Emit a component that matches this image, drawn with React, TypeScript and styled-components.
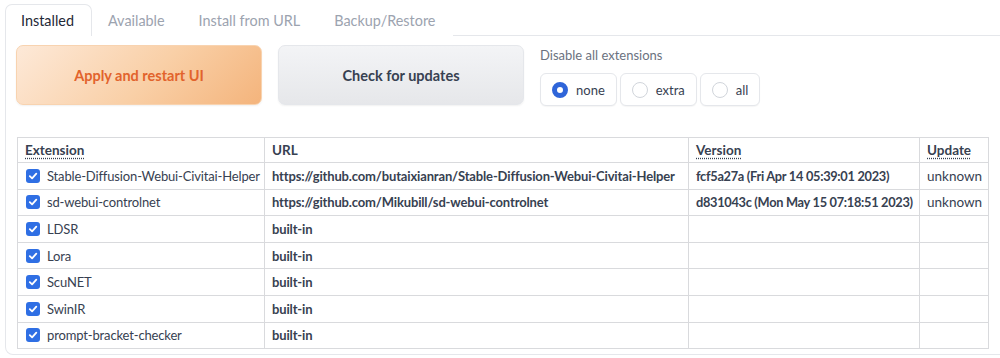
import React, { useState } from 'react'
import styled, { createGlobalStyle } from 'styled-components'

const GlobalStyle = createGlobalStyle`
  body {
    margin: 0;
    background: #fff;
    font-family: Lato, 'Noto Sans', sans-serif;
    color: #1f2937;
    overflow: hidden;
  }
`

const Page = styled.div`
  padding: 4px 0 0 5px;
`

const TabBar = styled.div`
  display: flex;
  height: 31px;
  border-bottom: 1px solid #e5e7eb;
`

const Tab = styled.div<{ active?: boolean }>`
  display: flex;
  align-items: center;
  padding: 0 17px 0 15px;
  font-size: 14.4px;
  color: ${p => (p.active ? '#1f2937' : '#9ca3af')};
  background: #fff;
  border: 1px solid ${p => (p.active ? '#e5e7eb' : 'transparent')};
  border-bottom: none;
  border-radius: 7px 7px 0 0;
  height: 32px;
  box-sizing: border-box;
`

const Panel = styled.div`
  border: 1px solid #e5e7eb;
  border-top: none;
  border-radius: 0 0 0 8px;
  margin-right: -20px;
  padding: 9px 0 5px 10px;
`

const Controls = styled.div`
  display: flex;
  gap: 16px;
`

const BigButton = styled.button<{ primary?: boolean }>`
  width: 246px;
  height: 60px;
  border-radius: 7px;
  font-family: inherit;
  font-size: 14.5px;
  font-weight: 700;
  cursor: pointer;
  border: 1px solid ${p => (p.primary ? '#f8d3b0' : '#e5e7eb')};
  color: ${p => (p.primary ? '#e2632c' : '#374151')};
  background: ${p =>
    p.primary
      ? 'linear-gradient(135deg, #fde9d8 0%, #f9cfa6 55%, #f4b47c 100%)'
      : 'linear-gradient(180deg, #f3f4f6 0%, #e6e7ea 100%)'};
  box-shadow: 0 1px 2px rgba(0, 0, 0, 0.06);
`

const RadioBlock = styled.div`
  display: flex;
  flex-direction: column;
  padding-top: 2px;
`

const RadioLabel = styled.div`
  font-size: 13px;
  color: #6b7280;
  height: 16px;
  margin-bottom: 10px;
`

const RadioRow = styled.div`
  display: flex;
  gap: 3px;
`

const RadioItem = styled.label`
  display: flex;
  align-items: center;
  gap: 8px;
  height: 33px;
  padding: 0 11px;
  box-sizing: border-box;
  border: 1px solid #e5e7eb;
  border-radius: 6px;
  background: #fff;
  font-size: 13px;
  color: #374151;
  box-shadow: 0 1px 1px rgba(0, 0, 0, 0.04);
  cursor: pointer;
`

const RadioDot = styled.span<{ checked: boolean }>`
  width: 16px;
  height: 16px;
  border-radius: 50%;
  box-sizing: border-box;
  background: #fff;
  border: ${p => (p.checked ? '5px solid #2f65d9' : '1px solid #d1d5db')};
`

const Table = styled.table`
  margin: 31px 0 0 1px;
  width: 971px;
  border-collapse: collapse;
  table-layout: fixed;
  font-size: 13.5px;
  color: #374151;
`

const HeadCell = styled.th<{ w: number }>`
  width: ${p => p.w}px;
  box-sizing: border-box;
  height: 25px;
  text-align: left;
  padding: 0 7px;
  font-weight: 700;
  border: 1px solid #d9dadd;
  white-space: nowrap;
`

const Abbr = styled.span<{ dotted?: boolean }>`
  text-decoration: ${p => (p.dotted ? 'underline dotted' : 'none')};
  text-underline-offset: 3px;
`

type Kind = 'name' | 'url' | 'version' | 'plain'

const sizes: Record<Kind, string> = { name: '13px', url: '13px', version: '12.8px', plain: '13.5px' }
const spacing: Record<Kind, string> = { name: '-0.15px', url: '-0.15px', version: '-0.3px', plain: '0' }

const Cell = styled.td<{ kind: Kind }>`
  height: 25.6px;
  padding: ${p => (p.kind === 'name' ? '0 0 0 7px' : '0 7px')};
  border: 1px solid #d9dadd;
  white-space: nowrap;
  overflow: ${p => (p.kind === 'name' ? 'visible' : 'hidden')};
  font-weight: ${p => (p.kind === 'url' || p.kind === 'version' ? 700 : 400)};
  font-size: ${p => sizes[p.kind]};
  letter-spacing: ${p => spacing[p.kind]};
`

const NameWrap = styled.label`
  display: flex;
  align-items: center;
  gap: 7px;
  padding-left: 1px;
`

const Check = styled.span`
  width: 14px;
  height: 14px;
  border-radius: 3px;
  background: #2f6fe4;
  display: inline-flex;
  align-items: center;
  justify-content: center;
  flex: none;
`

const rows = [
  {
    name: 'Stable-Diffusion-Webui-Civitai-Helper',
    url: 'https://github.com/butaixianran/Stable-Diffusion-Webui-Civitai-Helper',
    version: 'fcf5a27a (Fri Apr 14 05:39:01 2023)',
    update: 'unknown',
  },
  {
    name: 'sd-webui-controlnet',
    url: 'https://github.com/Mikubill/sd-webui-controlnet',
    version: 'd831043c (Mon May 15 07:18:51 2023)',
    update: 'unknown',
  },
  { name: 'LDSR', url: 'built-in', version: '', update: '' },
  { name: 'Lora', url: 'built-in', version: '', update: '' },
  { name: 'ScuNET', url: 'built-in', version: '', update: '' },
  { name: 'SwinIR', url: 'built-in', version: '', update: '' },
  { name: 'prompt-bracket-checker', url: 'built-in', version: '', update: '' },
]

const CheckMark = () => (
  <svg width="10" height="10" viewBox="0 0 10 10">
    <path d="M1.8 5.2 L4.1 7.4 L8.3 2.6" fill="none" stroke="#fff" strokeWidth="1.8" strokeLinecap="round" strokeLinejoin="round" />
  </svg>
)

export default function App() {
  const [mode, setMode] = useState('none')
  return (
    <Page>
      <GlobalStyle />
      <TabBar>
        <Tab active>Installed</Tab>
        <Tab>Available</Tab>
        <Tab>Install from URL</Tab>
        <Tab>Backup/Restore</Tab>
      </TabBar>
      <Panel>
        <Controls>
          <BigButton primary>Apply and restart UI</BigButton>
          <BigButton>Check for updates</BigButton>
          <RadioBlock>
            <RadioLabel>Disable all extensions</RadioLabel>
            <RadioRow>
              {['none', 'extra', 'all'].map(m => (
                <RadioItem key={m} onClick={() => setMode(m)}>
                  <RadioDot checked={mode === m} />
                  {m}
                </RadioItem>
              ))}
            </RadioRow>
          </RadioBlock>
        </Controls>
        <Table>
          <thead>
            <tr>
              <HeadCell w={247}>
                <Abbr dotted>Extension</Abbr>
              </HeadCell>
              <HeadCell w={424}>
                <Abbr>URL</Abbr>
              </HeadCell>
              <HeadCell w={231}>
                <Abbr dotted>Version</Abbr>
              </HeadCell>
              <HeadCell w={69}>
                <Abbr dotted>Update</Abbr>
              </HeadCell>
            </tr>
          </thead>
          <tbody>
            {rows.map(r => (
              <tr key={r.name}>
                <Cell kind="name">
                  <NameWrap>
                    <Check>
                      <CheckMark />
                    </Check>
                    {r.name}
                  </NameWrap>
                </Cell>
                <Cell kind="url">{r.url}</Cell>
                <Cell kind="version">{r.version}</Cell>
                <Cell kind="plain">{r.update}</Cell>
              </tr>
            ))}
          </tbody>
        </Table>
      </Panel>
    </Page>
  )
}
